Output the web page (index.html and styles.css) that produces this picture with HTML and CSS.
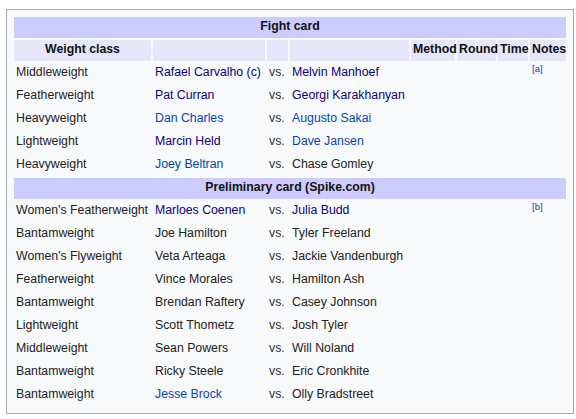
FILE: index.html
```html
<!DOCTYPE html>
<html>
<head>
<meta charset="utf-8">
<link rel="stylesheet" href="styles.css">
</head>
<body>
<div class="box">
<table class="card">
<colgroup>
<col class="c1"><col class="c2"><col class="c3"><col class="c4"><col class="c5"><col class="c6"><col class="c7"><col class="c8">
</colgroup>
<tr><th colspan="8" class="sec">Fight card</th></tr>
<tr class="hd"><th>Weight class</th><th></th><th></th><th></th><th>Method</th><th>Round</th><th>Time</th><th>Notes</th></tr>
<tr><td>Middleweight</td><td><a class="v">Rafael Carvalho (c)</a></td><td class="vs">vs.</td><td><a class="v">Melvin Manhoef</a></td><td></td><td></td><td></td><td class="note"><sup>[a]</sup></td></tr>
<tr><td>Featherweight</td><td><a class="v">Pat Curran</a></td><td class="vs">vs.</td><td><a class="v">Georgi Karakhanyan</a></td><td></td><td></td><td></td><td></td></tr>
<tr><td>Heavyweight</td><td><a class="l">Dan Charles</a></td><td class="vs">vs.</td><td><a class="l">Augusto Sakai</a></td><td></td><td></td><td></td><td></td></tr>
<tr><td>Lightweight</td><td><a class="v">Marcin Held</a></td><td class="vs">vs.</td><td><a class="l">Dave Jansen</a></td><td></td><td></td><td></td><td></td></tr>
<tr><td>Heavyweight</td><td><a class="l">Joey Beltran</a></td><td class="vs">vs.</td><td>Chase Gomley</td><td></td><td></td><td></td><td></td></tr>
<tr><th colspan="8" class="sec">Preliminary card (Spike.com)</th></tr>
<tr><td>Women's Featherweight</td><td><a class="v">Marloes Coenen</a></td><td class="vs">vs.</td><td><a class="v">Julia Budd</a></td><td></td><td></td><td></td><td class="note"><sup>[b]</sup></td></tr>
<tr><td>Bantamweight</td><td>Joe Hamilton</td><td class="vs">vs.</td><td>Tyler Freeland</td><td></td><td></td><td></td><td></td></tr>
<tr><td>Women's Flyweight</td><td>Veta Arteaga</td><td class="vs">vs.</td><td>Jackie Vandenburgh</td><td></td><td></td><td></td><td></td></tr>
<tr><td>Featherweight</td><td>Vince Morales</td><td class="vs">vs.</td><td>Hamilton Ash</td><td></td><td></td><td></td><td></td></tr>
<tr><td>Bantamweight</td><td>Brendan Raftery</td><td class="vs">vs.</td><td>Casey Johnson</td><td></td><td></td><td></td><td></td></tr>
<tr><td>Lightweight</td><td>Scott Thometz</td><td class="vs">vs.</td><td>Josh Tyler</td><td></td><td></td><td></td><td></td></tr>
<tr><td>Middleweight</td><td>Sean Powers</td><td class="vs">vs.</td><td>Will Noland</td><td></td><td></td><td></td><td></td></tr>
<tr><td>Bantamweight</td><td>Ricky Steele</td><td class="vs">vs.</td><td>Eric Cronkhite</td><td></td><td></td><td></td><td></td></tr>
<tr><td>Bantamweight</td><td><a class="l">Jesse Brock</a></td><td class="vs">vs.</td><td>Olly Bradstreet</td><td></td><td></td><td></td><td></td></tr>
</table>
</div>
</body>
</html>
```

FILE: styles.css
```css
html, body {
  margin: 0;
  padding: 0;
  background: #ffffff;
}
body {
  padding: 9px 2px 0 6px;
  font-family: "Liberation Sans", Arial, sans-serif;
  font-size: 12.3px;
  color: #222222;
}
.box {
  border: 1px solid #a2a9b1;
  background: #f8f9fa;
  padding: 5px;
  box-sizing: border-box;
  width: 568px;
}
.card {
  border-collapse: separate;
  border-spacing: 2px;
  table-layout: fixed;
  width: 556px;
}
.c1 { width: 137px; }
.c2 { width: 112px; }
.c3 { width: 21px; }
.c4 { width: 119px; }
.c5 { width: 44px; }
.c6 { width: 39px; }
.c7 { width: 30px; }
.c8 { width: 36px; }
.card td, .card th {
  height: 21px;
  padding: 0 2px 2px 2px;
  box-sizing: border-box;
  line-height: 17px;
  white-space: nowrap;
  vertical-align: middle;
  overflow: visible;
}
.card td {
  text-align: left;
}
.card th {
  font-weight: bold;
  text-align: center;
  color: #111111;
}
.sec {
  background: #ccccff;
  color: #101040;
}
.hd th {
  background: #e6e6fa;
}
.vs { color: #333333; }
a.v { color: #0b0080; text-decoration: none; }
a.l { color: #0645ad; text-decoration: none; }
.card td.note {
  vertical-align: top;
  padding-top: 1px;
}
.note sup {
  font-size: 9.5px;
  line-height: 10px;
  color: #0645ad;
  vertical-align: top;
}
```
